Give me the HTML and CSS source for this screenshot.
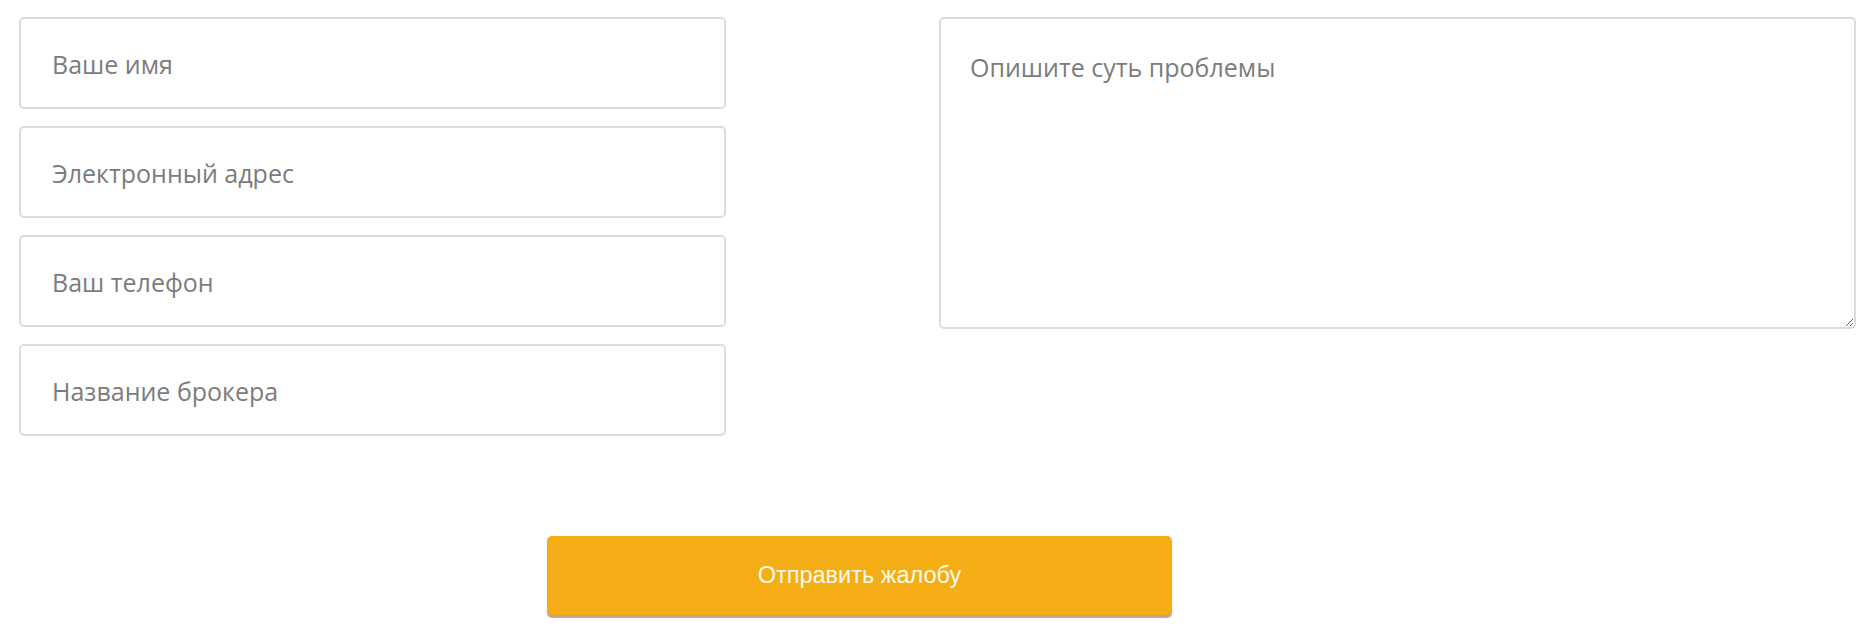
FILE: index.html
```html
<!DOCTYPE html>
<html lang="ru">
<head>
<meta charset="utf-8">
<title>Жалоба</title>
<link rel="stylesheet" href="styles.css">
</head>
<body>
<form class="complaint">
  <div class="fields">
    <div class="col-left">
      <input class="field" type="text" placeholder="Ваше имя">
      <input class="field" type="text" placeholder="Электронный адрес">
      <input class="field" type="text" placeholder="Ваш телефон">
      <input class="field" type="text" placeholder="Название брокера">
    </div>
    <div class="col-right">
      <textarea class="area" placeholder="Опишите суть проблемы"></textarea>
    </div>
  </div>
  <div class="actions">
    <button class="submit" type="button">Отправить жалобу</button>
  </div>
</form>
</body>
</html>
```

FILE: styles.css
```css
html, body {
  margin: 0;
  padding: 0;
  background: #fff;
}
.complaint {
  padding: 17px 0 0 19px;
}
.fields {
  display: grid;
  grid-template-columns: 707px 917px;
  column-gap: 213px;
}
.col-left {
  display: flex;
  flex-direction: column;
  gap: 17px;
}
.field, .area {
  box-sizing: border-box;
  width: 100%;
  border: 2px solid #dcdcdc;
  border-radius: 5px;
  background: #fff;
  font-family: "Open Sans", sans-serif;
  font-size: 25px;
  color: #555;
  outline: none;
  margin: 0;
}
.field {
  height: 92px;
  padding: 2px 31px 0;
}
.area {
  display: block;
  height: 312px;
  padding: 31px 29px;
  line-height: 34px;
  resize: vertical;
}
.field::placeholder, .area::placeholder {
  color: #7c7c7c;
  opacity: 1;
}
.actions {
  padding: 100px 0 8px 528px;
}
.submit {
  width: 625px;
  height: 79px;
  border: none;
  border-radius: 5px;
  background: #f5ad16;
  box-shadow: 0 3px 1px #b8a895;
  color: #fffbea;
  font-family: "Liberation Sans", Arial, sans-serif;
  font-size: 23.5px;
  cursor: pointer;
  padding: 0;
}
```
